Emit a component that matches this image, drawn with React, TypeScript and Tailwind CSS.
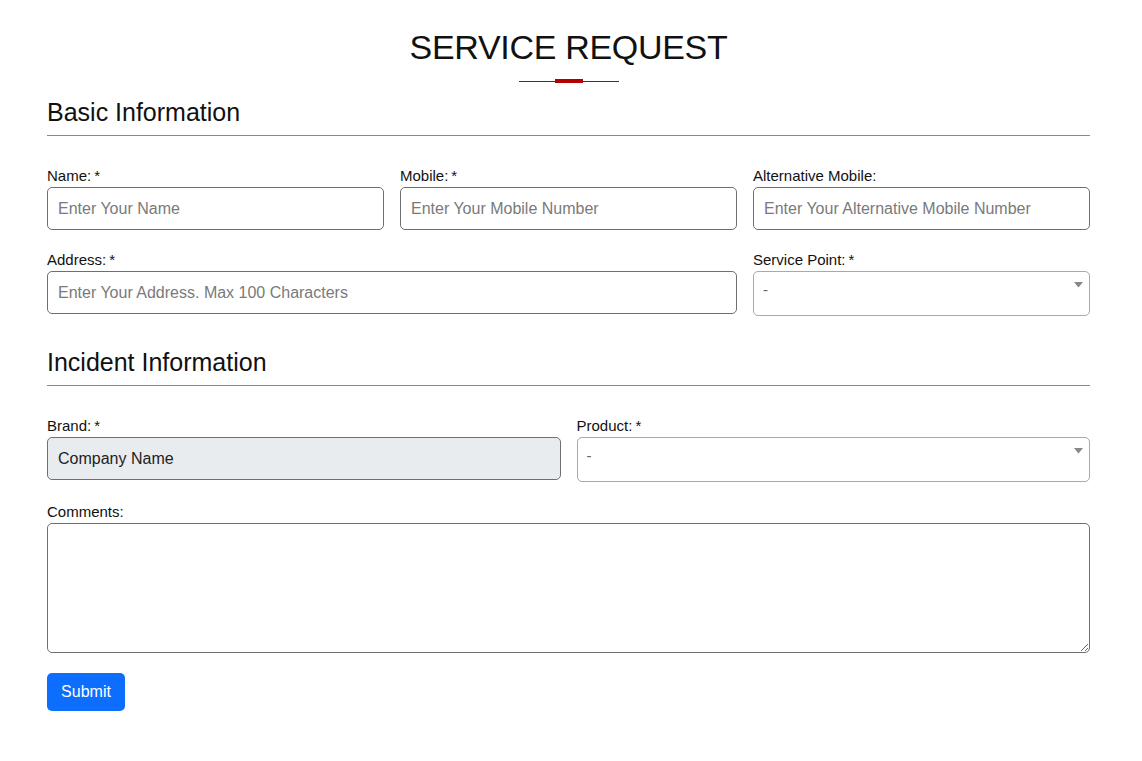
import React from 'react';

const font = { fontFamily: '"Liberation Sans", Arial, sans-serif' };

interface FieldProps {
  label: string;
  required?: boolean;
  children: React.ReactNode;
  className?: string;
}

const Field: React.FC<FieldProps> = ({ label, required, children, className = '' }) => (
  <div className={`flex flex-col ${className}`}>
    <label className="mb-[2px] text-[15px] leading-[18px] text-[#111]">
      {label}
      {required && <span className="ml-[3px]">*</span>}
    </label>
    {children}
  </div>
);

const TextInput: React.FC<{ placeholder?: string; value?: string; disabled?: boolean }> = ({
  placeholder,
  value,
  disabled,
}) => (
  <input
    type="text"
    placeholder={placeholder}
    defaultValue={value}
    readOnly={disabled}
    className={`h-[43px] w-full rounded-[5px] border border-[#6f6f6f] px-[10px] text-[16px] text-[#222] placeholder:text-[#7a7a7a] outline-none ${
      disabled ? 'bg-[#e9ecef]' : 'bg-white'
    }`}
    style={font}
  />
);

const FakeSelect: React.FC = () => (
  <div className="relative h-[45px] w-full rounded-[5px] border border-[#a9a9a9] bg-white">
    <span className="absolute left-[9px] top-[7px] text-[15px] text-[#666]">-</span>
    <svg className="absolute right-[6px] top-[10px]" width="9" height="6" viewBox="0 0 9 6">
      <path d="M0 0 L9 0 L4.5 5.5 Z" fill="#888" />
    </svg>
  </div>
);

const SectionHeading: React.FC<{ title: string; className?: string }> = ({ title, className = '' }) => (
  <div className={className}>
    <h2 className="text-[25px] leading-[30px] text-[#111]">{title}</h2>
    <div className="mt-[8px] h-px bg-[#8a8a8a]" />
  </div>
);

export default function App() {
  return (
    <div className="min-h-screen bg-white" style={font}>
      <div className="ml-[47px] w-[1043px] pt-[27px]">
        <div className="flex flex-col items-center">
          <h1 className="text-[34px] leading-[40px] text-[#111] tracking-[-0.3px]">SERVICE REQUEST</h1>
          <div className="mt-[12px] flex items-center">
            <div className="h-px w-[36px] bg-[#b30000]" />
            <div className="h-[4px] w-[28px] bg-[#b30000]" />
            <div className="h-px w-[36px] bg-[#b30000]" />
          </div>
        </div>

        <SectionHeading title="Basic Information" className="mt-[14px]" />

        <div className="mt-[31px] grid grid-cols-3 gap-x-[16px]">
          <Field label="Name:" required>
            <TextInput placeholder="Enter Your Name" />
          </Field>
          <Field label="Mobile:" required>
            <TextInput placeholder="Enter Your Mobile Number" />
          </Field>
          <Field label="Alternative Mobile:">
            <TextInput placeholder="Enter Your Alternative Mobile Number" />
          </Field>
        </div>

        <div className="mt-[21px] grid grid-cols-3 gap-x-[16px]">
          <Field label="Address:" required className="col-span-2">
            <TextInput placeholder="Enter Your Address. Max 100 Characters" />
          </Field>
          <Field label="Service Point:" required>
            <FakeSelect />
          </Field>
        </div>

        <SectionHeading title="Incident Information" className="mt-[31px]" />

        <div className="mt-[31px] grid grid-cols-2 gap-x-[16px]">
          <Field label="Brand:" required>
            <TextInput value="Company Name" disabled />
          </Field>
          <Field label="Product:" required>
            <FakeSelect />
          </Field>
        </div>

        <Field label="Comments:" className="mt-[21px]">
          <textarea className="h-[130px] w-full rounded-[5px] border border-[#6f6f6f] bg-white px-[10px] py-[6px] text-[16px] outline-none" />
        </Field>

        <button className="mt-[20px] h-[38px] w-[78px] rounded-[5px] bg-[#0d6efd] text-[16px] text-white">
          Submit
        </button>
      </div>
    </div>
  );
}
